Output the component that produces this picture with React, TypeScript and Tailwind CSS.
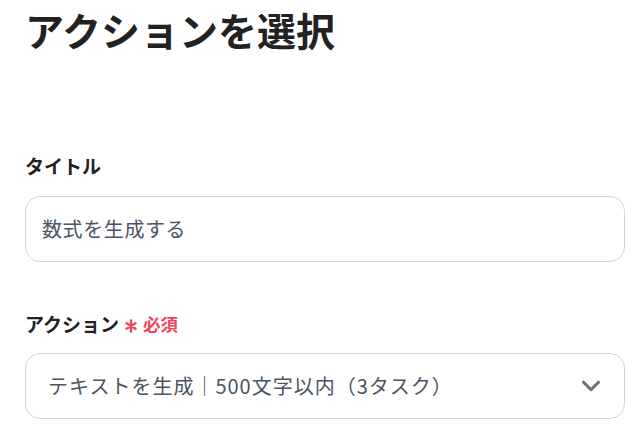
import { ChevronDown } from "lucide-react";

export default function App() {
  return (
    <main className="min-h-screen bg-white px-[25px] pt-[1px] font-['Noto_Sans_CJK_JP','Noto_Sans',sans-serif] text-[#222]">
      <h1 className="text-[39px] font-bold leading-[56px]">アクションを選択</h1>

      <section className="mt-[96px]">
        <label className="block text-[19px] font-bold leading-[26px]">タイトル</label>
        <div className="mt-[17px] flex h-[66px] w-[600px] items-center rounded-[15px] border border-[#d1d5db] px-[16px] text-[20px] tracking-[0.6px] text-[#4b5563]">
          数式を生成する
        </div>
      </section>

      <section className="mt-[49px]">
        <label className="flex items-center text-[19px] font-bold leading-[26px]">
          アクション
          <svg
            className="ml-[6px] mt-[4px]"
            width="12"
            height="14"
            viewBox="0 0 12 14"
            stroke="#f0475e"
            strokeWidth="2.4"
            strokeLinecap="round"
          >
            <path d="M6 1.5v11M1.5 4.2l9 5.6M10.5 4.2l-9 5.6" />
          </svg>
          <span className="ml-[6px] text-[17.5px] text-[#f0475e]">必須</span>
        </label>
        <div className="mt-[16px] flex h-[66px] w-[600px] items-center justify-between rounded-[15px] border border-[#d1d5db] pl-[22px] pr-[18px] text-[20px] tracking-[1px] text-[#4b5563]">
          <span>テキストを生成｜500文字以内（3タスク）</span>
          <ChevronDown className="h-[30px] w-[30px] text-[#6b7280]" strokeWidth={2.5} />
        </div>
      </section>
    </main>
  );
}
